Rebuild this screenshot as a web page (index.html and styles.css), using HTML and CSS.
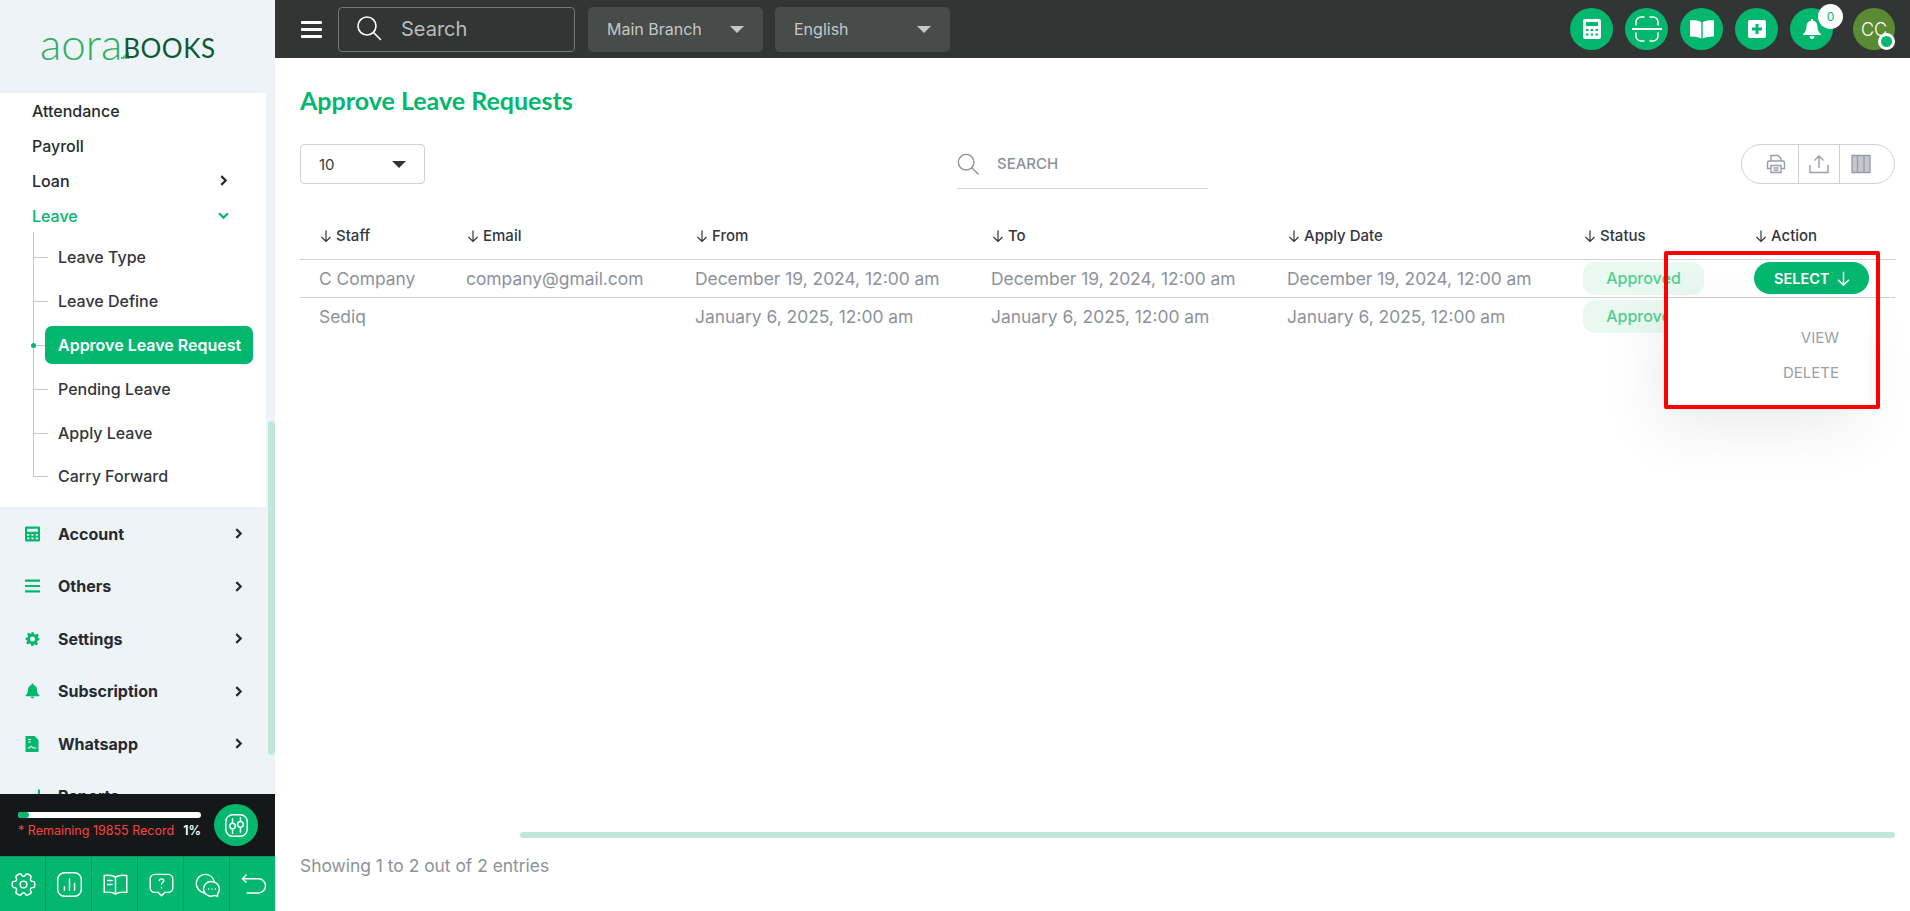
FILE: index.html
```html
<!DOCTYPE html>
<html lang="en">
<head>
    <meta charset="UTF-8">
    <meta name="viewport" content="width=device-width, initial-scale=1.0">
    <title>Approve Leave Requests</title>
    <link rel="stylesheet" href="styles.css">
</head>
<body>
    <svg class="hidden">
        <symbol id="arrow" viewBox="0 0 14 14"><path d="M7 1.500v11M2.500 8l4.500 4.500L11.500 8" fill="none" stroke="currentColor" stroke-width="1.200"/></symbol>
        <symbol id="chev" viewBox="0 0 10 10"><path d="M3 1 7 5 3 9" fill="none" stroke="currentColor" stroke-width="2"/></symbol>
    </svg>
    <div class="app">
        <aside class="sidebar">
            <div class="logo"><span class="logo-a">aora</span><svg class="logo-bars" viewBox="0 0 8 8"><path d="M0 6h1.500v2H0zM2.200 4.500h1.500V8H2.200zM4.400 3h1.500v5H4.400zM6.500 1H8v7H6.500z" fill="#2fae62"/></svg><span class="logo-b">BOOKS</span></div>
            <div class="side-scroll">
                <nav class="side-nav">
                    <ul class="sub-panel">
                        <li class="link">Attendance</li>
                        <li class="link">Payroll</li>
                        <li class="link">Loan <svg class="chev"><use href="#chev"/></svg></li>
                        <li class="link open">Leave <svg class="chev down"><use href="#chev"/></svg></li>
                        <li>
                            <ul class="tree">
                                <li>Leave Type</li>
                                <li>Leave Define</li>
                                <li class="active"><span>Approve Leave Request</span></li>
                                <li>Pending Leave</li>
                                <li>Apply Leave</li>
                                <li>Carry Forward</li>
                            </ul>
                        </li>
                    </ul>
                    <ul class="main-links">
                        <li>
                            <svg class="side-icon" viewBox="0 0 14 14"><path fill-rule="evenodd" d="M1 0h12a1 1 0 0 1 1 1v12a1 1 0 0 1-1 1H1a1 1 0 0 1-1-1V1a1 1 0 0 1 1-1Zm1 2v3h10V2H2Zm0 5v1.700h2V7H2Zm4 0v1.700h2V7H6Zm4 0v1.700h2V7h-2Zm-8 3.300V12h2v-1.700H2Zm4 0V12h2v-1.700H6Zm4 0V12h2v-1.700h-2Z"/></svg>
                            Account <svg class="chev"><use href="#chev"/></svg>
                        </li>
                        <li>
                            <svg class="side-icon" viewBox="0 0 14 14"><path d="M0 1h14v2H0zM0 6h14v2H0zM0 11h14v2H0z"/></svg>
                            Others <svg class="chev"><use href="#chev"/></svg>
                        </li>
                        <li>
                            <svg class="side-icon" viewBox="0 0 24 24"><path fill-rule="evenodd" d="M10 1h4l.7 3.200 1.900.8 2.800-1.800 2.800 2.800-1.800 2.800.8 1.900L23 10v4l-3.200.7-.8 1.900 1.800 2.800-2.800 2.800-2.800-1.800-1.900.8L14 23h-4l-.7-3.200-1.900-.8-2.800 1.800-2.800-2.800 1.800-2.800-.8-1.900L1 14v-4l3.200-.7.8-1.900-1.800-2.800 2.800-2.800 2.800 1.800 1.900-.8ZM12 8a4 4 0 1 0 0 8 4 4 0 0 0 0-8Z"/></svg>
                            Settings <svg class="chev"><use href="#chev"/></svg>
                        </li>
                        <li>
                            <svg class="side-icon" viewBox="0 0 14 14"><path d="M7 0c.6 0 1 .4 1 1v.500C10 2 11.200 3.700 11.200 5.800c0 2.400.8 3.700 2.300 5.200v.8H.5V11C2 9.500 2.800 8.200 2.800 5.800 2.800 3.700 4 2 6 1.500V1c0-.6.4-1 1-1ZM5.500 12.400h3C8.400 13.400 7.800 14 7 14s-1.400-.6-1.500-1.600Z"/></svg>
                            Subscription <svg class="chev"><use href="#chev"/></svg>
                        </li>
                        <li>
                            <svg class="side-icon" viewBox="0 0 14 16"><path fill-rule="evenodd" d="M0 0h9l4 4v12H0V0Zm2.500 3v1h3V3h-3Zm0 2.500v1h3v-1h-3ZM2 11.500v1h2l1.500-1.500 2 1.500H11v-1H8L5.500 9.500 3.500 11.500H2Z"/></svg>
                            Whatsapp <svg class="chev"><use href="#chev"/></svg>
                        </li>
                        <li>
                            <svg class="side-icon" viewBox="0 0 14 14"><path d="M4 9h2v5H4zM8 5h2v9H8zM12 1h2v13h-2z"/></svg>
                            Reports
                        </li>
                    </ul>
                </nav>
                <div class="side-track"><div class="side-thumb"></div></div>
            </div>
            <div class="usage">
                <div class="usage-info">
                    <div class="usage-bar"><div class="usage-fill" style="width: 6%"></div></div>
                    <div class="usage-text"><span class="usage-left">* Remaining 19855 Record</span><b>1%</b></div>
                </div>
                <div class="usage-btn">
                    <svg viewBox="0 0 24 24" fill="none" stroke="#fff" stroke-width="1.300" stroke-linecap="round"><rect x="2.500" y="2.500" width="19" height="19" rx="6"/><path d="M8.500 6v3.500M8.500 15.500V19M15.500 5v3M15.500 14v4"/><circle cx="8.500" cy="12.500" r="2.500"/><circle cx="15.500" cy="11" r="2.500"/></svg>
                </div>
            </div>
            <div class="quick">
                <a><svg viewBox="0 0 24 24"><path d="M12 15a3 3 0 1 0 0-6 3 3 0 0 0 0 6Z"/><path d="M2 12.880v-1.760c0-1.040.85-1.900 1.900-1.900 1.810 0 2.550-1.280 1.640-2.850-.52-.9-.21-2.070.7-2.590l1.730-.99c.79-.47 1.810-.19 2.280.6l.11.19c.9 1.570 2.380 1.570 3.290 0l.11-.19c.47-.79 1.490-1.070 2.280-.6l1.730.99c.91.52 1.220 1.690.7 2.590-.91 1.570-.17 2.850 1.640 2.850 1.040 0 1.900.85 1.900 1.900v1.760c0 1.040-.85 1.900-1.900 1.900-1.810 0-2.550 1.280-1.640 2.850.52.91.21 2.070-.7 2.590l-1.730.99c-.79.47-1.810.19-2.280-.6l-.11-.19c-.9-1.570-2.380-1.570-3.290 0l-.11.19c-.47.79-1.490 1.070-2.280.6l-1.730-.99a1.900 1.900 0 0 1-.7-2.590c.91-1.570.17-2.850-1.640-2.850-1.050 0-1.900-.86-1.900-1.900Z"/></svg></a>
                <a><svg viewBox="0 0 24 24"><rect x="1.500" y="1.500" width="21" height="21" rx="6"/><path d="M7.500 17v-3M12 17V7M16.500 17v-6"/></svg></a>
                <a><svg viewBox="0 0 24 24"><path d="M12 5.500v15M12 5.500C10 4 6 3.500 2 4v15c4-.5 8 0 10 1.500 2-1.500 6-2 10-1.500V4c-4-.5-8 0-10 1.500Z"/><path d="M5 8.500h4M5 12h4"/></svg></a>
                <a><svg viewBox="0 0 24 24"><path d="M6 3h12a4 4 0 0 1 4 4v8a4 4 0 0 1-4 4h-3l-3 3-3-3H6a4 4 0 0 1-4-4V7a4 4 0 0 1 4-4Z"/><path d="M10 8.500c.2-1 1-1.500 2-1.500 1.200 0 2 .7 2 1.700 0 1.500-2 1.500-2 3M12 14.500v.5"/></svg></a>
                <a><svg viewBox="0 0 24 24"><path d="M9 19.500C5 18.500 2 15 2 11c0-4.700 3.800-8 8-8 3.800 0 7 2.500 7.800 6"/><path d="M16 9.500a6.500 6.500 0 0 1 5 10.600V22.500l-3-.8a6.500 6.500 0 1 1-2-12.200Z"/><path d="M13 16h.01M16 16h.01M19 16h.01"/></svg></a>
                <a><svg class="undo" viewBox="0 0 24 24"><path d="M7.130 18.310h8c2.760 0 5-2.240 5-5s-2.240-5-5-5h-11"/><path d="M6.430 10.810 3.870 8.250l2.560-2.560"/></svg></a>
            </div>
        </aside>

        <div class="main">
            <header class="topbar">
                <div class="burger"><span></span><span></span><span></span></div>
                <div class="top-search">
                    <svg viewBox="0 0 26 26" fill="none" stroke="#fff" stroke-width="1.600" stroke-linecap="round"><circle cx="11" cy="11" r="9"/><path d="m17.500 17.500 7 7"/></svg>
                    Search
                </div>
                <div class="top-select">Main Branch<i class="caret"></i></div>
                <div class="top-select">English<i class="caret"></i></div>
                <div class="top-icons">
                    <div class="round">
                        <svg viewBox="0 0 18 20"><path fill-rule="evenodd" fill="#fff" d="M2 0h14a2 2 0 0 1 2 2v16a2 2 0 0 1-2 2H2a2 2 0 0 1-2-2V2a2 2 0 0 1 2-2Zm1 3v4h12V3H3Zm0 7v2h2.500v-2H3Zm4.700 0v2h2.500v-2H7.700Zm4.800 0v2H15v-2h-2.500ZM3 14.500v2h2.500v-2H3Zm4.700 0v2h2.500v-2H7.700Zm4.800 0v2H15v-2h-2.500Z"/></svg>
                    </div>
                    <div class="round">
                        <svg class="scan" viewBox="0 0 30 26" fill="none" stroke="#fff" stroke-width="1.500" stroke-linecap="round"><path d="M4 9V6a5 5 0 0 1 5-5h3M18 1h3a5 5 0 0 1 5 5v3M4 17v3a5 5 0 0 0 5 5h3M18 25h3a5 5 0 0 0 5-5v-3"/><path d="M0 13h30" stroke-width="2"/></svg>
                    </div>
                    <div class="round">
                        <svg class="book" viewBox="0 0 24 20"><path fill="#fff" d="M11.300 3.200v16.300C8.500 18 4.500 17.300 0 17.500V1.500C4.500 1 8.500 1.500 11.300 3.200ZM12.700 3.200C15.500 1.500 19.500 1 24 1.500v16c-4.500-.2-8.500.5-11.300 2V3.200Z"/></svg>
                    </div>
                    <div class="round">
                        <svg viewBox="0 0 18 18"><path fill-rule="evenodd" fill="#fff" d="M2 0h14a2 2 0 0 1 2 2v14a2 2 0 0 1-2 2H2a2 2 0 0 1-2-2V2a2 2 0 0 1 2-2Zm5.500 4v3.500H4v3h3.500V14h3v-3.500H14v-3h-3.500V4h-3Z"/></svg>
                    </div>
                    <div class="round bell">
                        <svg viewBox="0 0 18 20"><path fill="#fff" d="M9 0c.7 0 1.200.5 1.200 1.200v.6c2.800.6 4.300 3 4.300 5.600 0 3.600 1.200 5.600 3.500 7.900V16H0v-.7c2.300-2.300 3.500-4.300 3.500-7.900 0-2.600 1.500-5 4.300-5.600v-.6C7.800.5 8.300 0 9 0ZM6.500 17.200h5C11.300 18.800 10.300 20 9 20s-2.300-1.200-2.500-2.800Z"/></svg>
                        <span class="badge">0</span>
                    </div>
                    <div class="avatar">CC<span class="online"></span></div>
                </div>
            </header>

            <section class="content">
                <h1>Approve Leave Requests</h1>
                <div class="toolbar">
                    <div class="page-size">10<i class="caret dark"></i></div>
                    <div class="table-search">
                        <svg viewBox="0 0 24 24" fill="none" stroke="#8d919c" stroke-width="1.500" stroke-linecap="round"><circle cx="10" cy="10" r="8.500"/><path d="m16.500 16.500 6.500 6.500"/></svg>
                        SEARCH
                    </div>
                    <div class="tool-btns">
                        <span>
                            <svg viewBox="0 0 20 20" fill="none" stroke="#9a9eaa" stroke-width="1.400"><path d="M5 7V1.500h7L15 4.500V7"/><path d="M5 14.500H1.500V9a2 2 0 0 1 2-2h13a2 2 0 0 1 2 2v5.500H15"/><path d="M5 11.500h10v7H5zM7.500 14h5M7.500 16.300h5"/></svg>
                        </span>
                        <span>
                            <svg viewBox="0 0 20 20" fill="none" stroke="#9a9eaa" stroke-width="1.400"><path d="M10 14V2M5.500 6.500 10 2l4.500 4.500"/><path d="M1 11v7.500h18V11"/></svg>
                        </span>
                        <span>
                            <svg viewBox="0 0 20 20" fill="#c5c7cf" stroke="#9a9eaa" stroke-width="1.400"><path d="M1 1.500h5.500v17H1zM6.500 1.500H13v17H6.500zM13 1.500h6v17h-6z"/></svg>
                        </span>
                    </div>
                </div>

                <div class="table-wrap">
                    <table>
                        <colgroup>
                            <col class="c-staff"><col class="c-email"><col class="c-date"><col class="c-date"><col class="c-apply"><col class="c-status"><col>
                        </colgroup>
                        <thead>
                            <tr>
                                <th><svg class="arrow"><use href="#arrow"/></svg>Staff</th>
                                <th><svg class="arrow"><use href="#arrow"/></svg>Email</th>
                                <th><svg class="arrow"><use href="#arrow"/></svg>From</th>
                                <th><svg class="arrow"><use href="#arrow"/></svg>To</th>
                                <th><svg class="arrow"><use href="#arrow"/></svg>Apply Date</th>
                                <th class="col-status"><svg class="arrow"><use href="#arrow"/></svg>Status</th>
                                <th><svg class="arrow"><use href="#arrow"/></svg>Action</th>
                            </tr>
                        </thead>
                        <tbody>
                            <tr>
                                <td>C Company</td>
                                <td>company@gmail.com</td>
                                <td>December 19, 2024, 12:00 am</td>
                                <td>December 19, 2024, 12:00 am</td>
                                <td>December 19, 2024, 12:00 am</td>
                                <td class="col-status"><span class="pill">Approved</span></td>
                                <td>
                                    <div class="action">
                                        <button class="select-btn">SELECT <svg><use href="#arrow"/></svg></button>
                                        <div class="action-menu">
                                            <a>VIEW</a>
                                            <a>DELETE</a>
                                        </div>
                                        <div class="red-mark"></div>
                                    </div>
                                </td>
                            </tr>
                            <tr>
                                <td>Sediq</td>
                                <td></td>
                                <td>January 6, 2025, 12:00 am</td>
                                <td>January 6, 2025, 12:00 am</td>
                                <td>January 6, 2025, 12:00 am</td>
                                <td class="col-status"><span class="pill">Approved</span></td>
                                <td></td>
                            </tr>
                        </tbody>
                    </table>
                </div>

                <div class="h-track"><div class="h-thumb"></div></div>
                <p class="entries">Showing 1 to 2 out of 2 entries</p>
            </section>
        </div>
    </div>
</body>
</html>
```

FILE: styles.css
```css
:root {
    --green: #03b76f;
    --text: #252a30;
    --muted: #8d919c;
    --line: #d0d0dc;
    --side-bg: #eef3f8;
}
* {
    box-sizing: border-box;
}
body {
    margin: 0;
    font-family: 'Inter', sans-serif;
    color: var(--text);
    background-color: #fff;
    overflow: hidden;
}
ul {
    list-style-type: none;
    margin: 0;
    padding: 0;
}
.hidden {
    display: none;
}
.app {
    display: flex;
    height: 911px;
}

/* sidebar */
.sidebar {
    width: 275px;
    flex-shrink: 0;
    display: flex;
    flex-direction: column;
    background-color: var(--side-bg);
}
.logo {
    height: 93px;
    flex-shrink: 0;
    padding-left: 40px;
    padding-top: 2px;
    display: flex;
    align-items: center;
    font-family: 'Lato', sans-serif;
    font-weight: 300;
}
.logo-a {
    font-size: 44px;
    line-height: 1;
    color: #2fae62;
    position: relative;
    top: -5px;
}
.logo-bars {
    width: 8px;
    height: 8px;
    margin: 14px -6px 0 -1px;
}
.logo-b {
    font-size: 26px;
    line-height: 1;
    color: #0b5a34;
    font-weight: 400;
    letter-spacing: 0.5px;
}
.side-scroll {
    flex: 1;
    display: flex;
    min-height: 0;
    overflow: hidden;
}
.side-nav {
    width: 268px;
    flex-shrink: 0;
}
.sub-panel {
    width: 266px;
    height: 414px;
    background-color: #fff;
    overflow: hidden;
}
.link {
    display: flex;
    align-items: center;
    justify-content: space-between;
    height: 35px;
    padding: 0 37px 0 32px;
    font-size: 16px;
    font-weight: 450;
}
.link.open {
    color: var(--green);
}
.chev {
    width: 11px;
    height: 11px;
}
.chev.down {
    transform: rotate(90deg);
}
.tree {
    position: relative;
    margin-left: 33px;
    padding-top: 2px;
}
.tree::before {
    content: "";
    position: absolute;
    left: 0;
    top: -1px;
    height: 245px;
    width: 1px;
    background-color: #c6c6d0;
}
.tree li {
    position: relative;
    height: 43.900px;
    display: flex;
    align-items: center;
    padding-left: 25px;
    font-size: 16px;
    font-weight: 450;
    color: #33363d;
}
.tree li::before {
    content: "";
    position: absolute;
    left: 0;
    top: 50%;
    width: 15px;
    height: 1px;
    background-color: #c6c6d0;
}
.tree .active {
    padding-left: 12px;
}
.tree .active span {
    display: flex;
    align-items: center;
    position: relative;
    height: 38px;
    width: 208px;
    padding-left: 13px;
    border-radius: 7px;
    background-color: var(--green);
    color: #fff;
    font-weight: 600;
    white-space: nowrap;
}
.tree .active::after {
    content: "";
    position: absolute;
    left: -2px;
    top: calc(50% - 2px);
    width: 5px;
    height: 5px;
    border-radius: 50%;
    background-color: var(--green);
}
.main-links {
    padding-top: 0.5px;
}
.main-links li {
    display: flex;
    align-items: center;
    height: 52.500px;
    padding-left: 25px;
    font-size: 16px;
    font-weight: 700;
}
.main-links .chev {
    margin-left: auto;
    margin-right: 24px;
}
.side-icon {
    width: 15px;
    height: 16px;
    margin-right: 18px;
    fill: var(--green);
}
.side-track {
    flex: 1;
}
.side-thumb {
    margin-top: 328px;
    height: 334px;
    width: 7px;
    border-radius: 4px;
    background-color: #bfe8d9;
}
.usage {
    height: 62px;
    flex-shrink: 0;
    display: flex;
    align-items: center;
    padding-left: 18px;
    background-color: #151818;
}
.usage-info {
    width: 183px;
}
.usage-bar {
    height: 6px;
    border-radius: 3px;
    background-color: #fff;
    margin-bottom: 5px;
}
.usage-fill {
    height: 100%;
    border-radius: 3px;
    background-color: var(--green);
}
.usage-text {
    display: flex;
    justify-content: space-between;
    font-size: 12.500px;
    line-height: 15px;
    white-space: nowrap;
}
.usage-left {
    color: #ff4040;
}
.usage-text b {
    color: #fff;
    font-weight: 600;
}
.usage-btn {
    width: 44px;
    height: 42px;
    margin-left: 13px;
    border-radius: 50%;
    background-color: var(--green);
    display: flex;
    align-items: center;
    justify-content: center;
}
.usage-btn svg {
    width: 27px;
    height: 27px;
}
.quick {
    height: 55px;
    flex-shrink: 0;
    display: flex;
    background-color: var(--green);
    border-top: 1px solid #059a5f;
}
.quick a {
    flex: 1;
    display: flex;
    align-items: center;
    justify-content: center;
    padding-left: 2px;
    border-left: 1px solid #059a5f;
}
.quick a:first-child {
    border-left: none;
}
.quick svg {
    width: 27px;
    height: 27px;
    fill: none;
    stroke: #fff;
    stroke-width: 1.300;
    stroke-linecap: round;
    stroke-linejoin: round;
}
.quick .undo {
    width: 34px;
    height: 34px;
    stroke-width: 1;
}

/* top bar */
.main {
    flex: 1;
    min-width: 0;
    display: flex;
    flex-direction: column;
}
.topbar {
    height: 58px;
    flex-shrink: 0;
    display: flex;
    align-items: center;
    padding: 0 15px 0 26px;
    background-color: #313534;
}
.burger {
    width: 21px;
    margin-right: 16px;
}
.burger span {
    display: block;
    height: 3px;
    margin: 4px 0;
    background-color: #fff;
    border-radius: 1px;
}
.top-search {
    width: 237px;
    height: 45px;
    display: flex;
    align-items: center;
    gap: 19px;
    padding-left: 17px;
    border: 1px solid #6f7a76;
    border-radius: 4px;
    color: #b9bdbb;
    font-size: 20px;
    margin-right: 13px;
}
.top-search svg {
    width: 26px;
    height: 26px;
    margin-top: -2px;
}
.top-select {
    width: 175px;
    height: 45px;
    margin-right: 12px;
    display: flex;
    align-items: center;
    justify-content: space-between;
    padding: 0 19px;
    border-radius: 5px;
    background-color: #474b4a;
    color: #c5c8c7;
    font-size: 16px;
}
.caret {
    width: 0;
    height: 0;
    border-left: 7px solid transparent;
    border-right: 7px solid transparent;
    border-top: 7px solid #c5c8c7;
}
.caret.dark {
    border-top-color: #313534;
}
.top-icons {
    margin-left: auto;
    display: flex;
    align-items: center;
    gap: 12px;
}
.round {
    position: relative;
    width: 43px;
    height: 42px;
    border-radius: 50%;
    background-color: var(--green);
    display: flex;
    align-items: center;
    justify-content: center;
}
.round svg {
    width: 18px;
    height: 20px;
}
.round .scan {
    width: 30px;
    height: 26px;
}
.round .book {
    width: 24px;
    height: 20px;
}
.badge {
    position: absolute;
    top: -4px;
    right: -10px;
    width: 25px;
    height: 25px;
    border-radius: 50%;
    background-color: #fff;
    color: var(--green);
    font-size: 12px;
    display: flex;
    align-items: center;
    justify-content: center;
}
.avatar {
    position: relative;
    width: 42px;
    height: 42px;
    margin-left: 8px;
    border-radius: 50%;
    background-color: #5a8a32;
    color: #fff;
    font-size: 18px;
    font-weight: 300;
    display: flex;
    align-items: center;
    justify-content: center;
}
.online {
    position: absolute;
    right: 0;
    bottom: 0;
    width: 17px;
    height: 17px;
    border-radius: 50%;
    background-color: var(--green);
    border: 3px solid #fff;
}

/* page */
.content {
    flex: 1;
    min-height: 0;
    display: flex;
    flex-direction: column;
    padding: 0 15px 0 25px;
}
h1 {
    margin: 24px 0 0;
    height: 38px;
    line-height: 36px;
    font-family: 'Lato', sans-serif;
    font-size: 25px;
    font-weight: 700;
    color: var(--green);
}
.toolbar {
    margin-top: 24px;
    height: 40px;
    display: flex;
    align-items: flex-start;
    position: relative;
}
.page-size {
    width: 125px;
    height: 40px;
    display: flex;
    align-items: center;
    justify-content: space-between;
    padding: 0 18px;
    border: 1px solid var(--line);
    border-radius: 4px;
    font-size: 15px;
    color: #3a3d42;
}
.table-search {
    margin-left: 532px;
    width: 251px;
    height: 45px;
    display: flex;
    align-items: center;
    gap: 18px;
    padding-bottom: 5px;
    border-bottom: 1px solid var(--line);
    font-size: 15px;
    font-weight: 500;
    color: var(--muted);
}
.table-search svg {
    width: 22px;
    height: 22px;
}
.tool-btns {
    margin-left: auto;
    width: 154px;
    height: 40px;
    display: flex;
    border: 1px solid var(--line);
    border-radius: 20px;
}
.tool-btns span {
    flex: 1;
    display: flex;
    align-items: center;
    justify-content: center;
    border-left: 1px solid var(--line);
}
.tool-btns span:first-child {
    flex: 0 0 56px;
    border-left: none;
    padding-left: 12px;
}
.tool-btns span:last-child {
    flex: 0 0 55px;
    padding-right: 13px;
}
.tool-btns svg {
    width: 20px;
    height: 20px;
}
.table-wrap {
    flex: 1;
    margin-top: 30px;
}
table {
    width: 1595px;
    table-layout: fixed;
    border-collapse: collapse;
}
.c-staff { width: 146px; }
.c-email { width: 229px; }
.c-date { width: 296px; }
.c-apply { width: 297px; }
.c-status { width: 171px; }
th {
    height: 45px;
    padding: 0 0 2px 20px;
    text-align: left;
    font-size: 15px;
    font-weight: 450;
    color: #33363d;
    border-bottom: 1px solid var(--line);
}
th:first-child,
td:first-child,
th:last-child,
td:last-child,
.col-status {
    padding-left: 19px;
}
.arrow {
    width: 14px;
    height: 14px;
    margin-right: 3px;
    vertical-align: -2px;
}
td {
    height: 38px;
    padding: 0 0 0 20px;
    font-size: 17.400px;
    color: var(--muted);
    white-space: nowrap;
    border-bottom: 1px solid var(--line);
}
tbody tr:last-child td {
    border-bottom: none;
}
.pill {
    display: inline-block;
    width: 121px;
    height: 33px;
    line-height: 33px;
    text-align: center;
    border-radius: 12px;
    background-color: #e9f8f1;
    color: #4fd08f;
    font-size: 16px;
    font-weight: 500;
}
.action {
    position: relative;
    height: 32px;
}
.select-btn {
    display: flex;
    align-items: center;
    gap: 6px;
    width: 115px;
    height: 32px;
    padding: 0 0 0 20px;
    border: none;
    border-radius: 16px;
    background-color: var(--green);
    color: #fff;
    font-family: inherit;
    font-size: 14.500px;
    font-weight: 600;
}
.select-btn svg {
    width: 17px;
    height: 17px;
}
.action-menu {
    position: absolute;
    left: -87px;
    top: 37px;
    width: 202px;
    height: 110px;
    padding: 30px 30px 0 0;
    background-color: #fff;
    border-radius: 4px;
    box-shadow: -10px 20px 60px rgba(0,0,0,0.08);
    display: flex;
    flex-direction: column;
    align-items: flex-end;
    gap: 17px;
    font-size: 15px;
    line-height: 18px;
    color: #9a9ea8;
}
.red-mark {
    position: absolute;
    left: -90px;
    top: -11px;
    width: 216px;
    height: 158px;
    border: 4px solid #ff0000;
    border-radius: 2px;
}
.h-track {
    height: 6px;
    padding-left: 220px;
    flex-shrink: 0;
}
.h-thumb {
    height: 6px;
    border-radius: 3px;
    background-color: #bfe8d9;
}
.entries {
    margin: 18px 0 35px;
    line-height: 20px;
    font-size: 17.400px;
    color: var(--muted);
}
```
